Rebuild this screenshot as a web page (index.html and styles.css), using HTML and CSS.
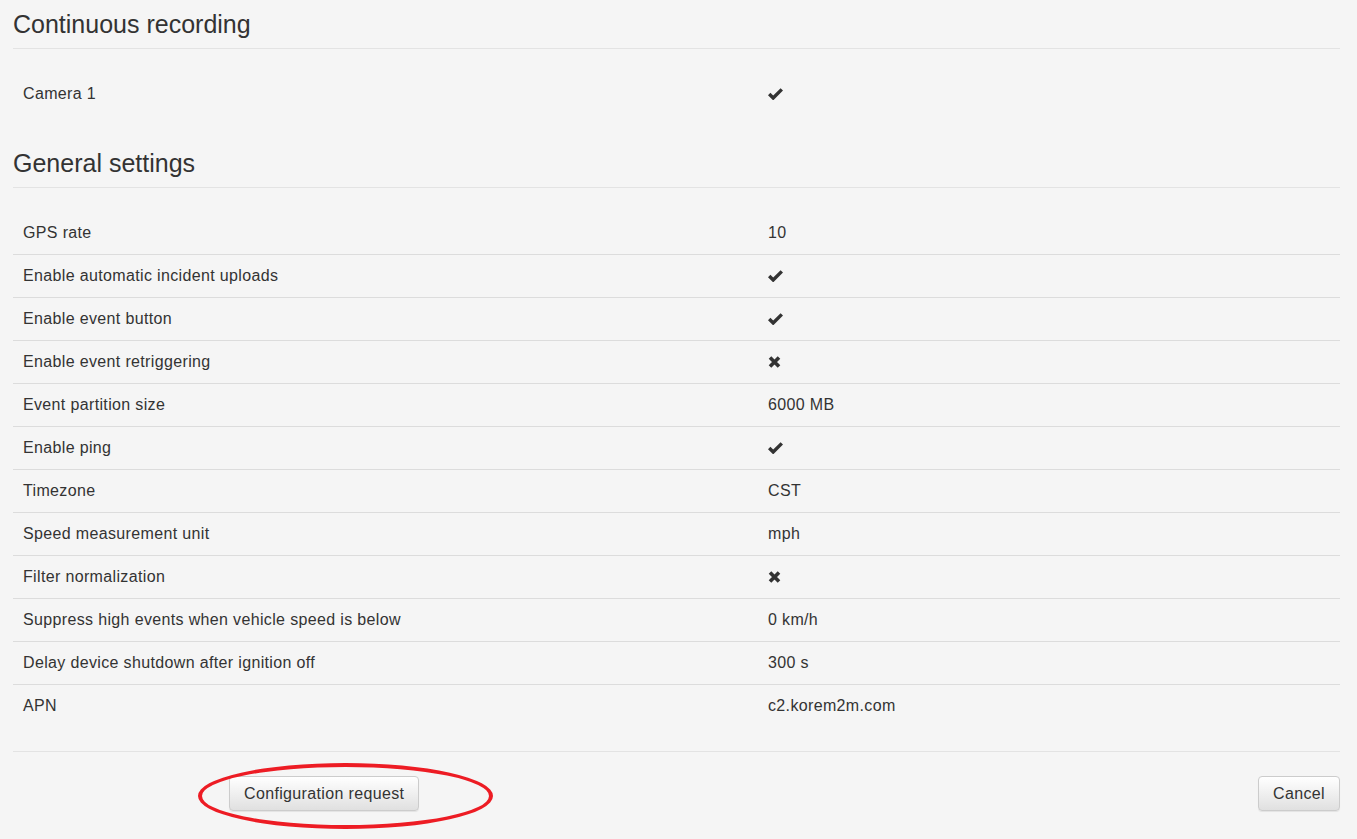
FILE: index.html
```html
<!DOCTYPE html>
<html lang="en">
<head>
<meta charset="utf-8">
<title>Device configuration</title>
<link rel="stylesheet" href="styles.css">
</head>
<body>
<div class="page">
  <h3 class="section-title">Continuous recording</h3>
  <table class="settings">
    <colgroup><col class="col-label"><col></colgroup>
    <tbody>
      <tr><td>Camera 1</td><td><svg class="icon icon-ok" viewBox="0 0 15 13"><polygon points="0,8.2 2.4,5.8 5.2,8.6 12.6,1.2 15,3.6 5.2,13.4"/></svg></td></tr>
    </tbody>
  </table>

  <h3 class="section-title">General settings</h3>
  <table class="settings">
    <colgroup><col class="col-label"><col></colgroup>
    <tbody>
      <tr><td>GPS rate</td><td>10</td></tr>
      <tr><td>Enable automatic incident uploads</td><td><svg class="icon icon-ok" viewBox="0 0 15 13"><polygon points="0,8.2 2.4,5.8 5.2,8.6 12.6,1.2 15,3.6 5.2,13.4"/></svg></td></tr>
      <tr><td>Enable event button</td><td><svg class="icon icon-ok" viewBox="0 0 15 13"><polygon points="0,8.2 2.4,5.8 5.2,8.6 12.6,1.2 15,3.6 5.2,13.4"/></svg></td></tr>
      <tr><td>Enable event retriggering</td><td><svg class="icon icon-x" viewBox="0 0 13 12"><path d="M2 1.5 L11 10.5 M11 1.5 L2 10.5"/></svg></td></tr>
      <tr><td>Event partition size</td><td>6000 MB</td></tr>
      <tr><td>Enable ping</td><td><svg class="icon icon-ok" viewBox="0 0 15 13"><polygon points="0,8.2 2.4,5.8 5.2,8.6 12.6,1.2 15,3.6 5.2,13.4"/></svg></td></tr>
      <tr><td>Timezone</td><td>CST</td></tr>
      <tr><td>Speed measurement unit</td><td>mph</td></tr>
      <tr><td>Filter normalization</td><td><svg class="icon icon-x" viewBox="0 0 13 12"><path d="M2 1.5 L11 10.5 M11 1.5 L2 10.5"/></svg></td></tr>
      <tr><td>Suppress high events when vehicle speed is below</td><td>0 km/h</td></tr>
      <tr><td>Delay device shutdown after ignition off</td><td>300 s</td></tr>
      <tr><td>APN</td><td>c2.korem2m.com</td></tr>
    </tbody>
  </table>

  <div class="footer">
    <div class="request-wrap">
      <button class="btn" type="button">Configuration request</button>
      <span class="annotation"></span>
    </div>
    <button class="btn" type="button">Cancel</button>
  </div>
</div>
</body>
</html>
```
FILE: styles.css
```css
html {
  overflow: hidden;
}
html, body {
  margin: 0;
  padding: 0;
  background: #f5f5f5;
}
body {
  font-family: "Liberation Sans", Arial, Helvetica, sans-serif;
  font-size: 16px;
  letter-spacing: 0.35px;
  color: #333;
}
.page {
  padding: 0 17px 29px 13px;
}
.section-title {
  margin: 34px 0 0;
  font-size: 25px;
  font-weight: normal;
  letter-spacing: 0;
  line-height: 26px;
  padding: 1px 0 11px;
  border-bottom: 1px solid #e3e3e3;
  color: #333;
}
.section-title:first-child {
  margin-top: 10px;
}
.settings {
  width: 100%;
  border-collapse: collapse;
  table-layout: fixed;
  margin-top: 23px;
}
.col-label {
  width: 745px;
}
.settings td {
  padding: 10px 10px 11px;
  line-height: 21px;
  border-top: 1px solid #dcdcdc;
  vertical-align: top;
  height: 21px;
}
.settings tr:first-child td {
  border-top-color: transparent;
}
.icon {
  display: inline-block;
  vertical-align: -1px;
  fill: #333;
}
.icon-ok {
  width: 15px;
  height: 13px;
}
.icon-x {
  width: 13px;
  height: 12px;
  fill: none;
  stroke: #333;
  stroke-width: 3.6;
}
.footer {
  margin-top: 24px;
  border-top: 1px solid #e3e3e3;
  padding: 24px 0 0;
  display: flex;
  justify-content: space-between;
  align-items: flex-start;
}
.request-wrap {
  position: relative;
  margin-left: 216px;
}
.btn {
  font-family: inherit;
  font-size: 16px;
  letter-spacing: 0.35px;
  line-height: 21px;
  color: #333;
  padding: 6px 14px;
  border: 1px solid #ccc;
  border-radius: 4px;
  background: linear-gradient(to bottom, #ffffff 0%, #e0e0e0 100%);
  box-shadow: inset 0 1px 0 rgba(255,255,255,0.15), 0 1px 1px rgba(0,0,0,0.075);
  cursor: pointer;
}
.annotation {
  position: absolute;
  left: -31px;
  top: -13px;
  width: 287px;
  height: 58px;
  border: 4px solid #ed1c24;
  border-radius: 50%;
  pointer-events: none;
}
```
